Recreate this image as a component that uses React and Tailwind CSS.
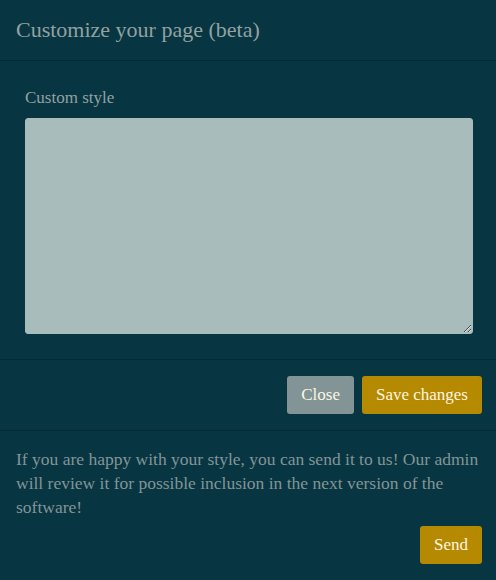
export default function App() {
  return (
    <div className="w-[496px] h-[580px] bg-[#073642] text-[#93a1a1] overflow-hidden" style={{ fontFamily: '"Liberation Serif", serif' }}>
      <div className="h-[61px] flex items-center px-4 border-b border-[#032a33]">
        <h1 className="text-[22px] leading-[28px] text-[#93a1a1]">Customize your page (beta)</h1>
      </div>
      <div className="pl-[25px] pt-[25px] pb-[25px] border-b border-[#032a33]">
        <label className="block text-[17px] leading-[24px] mb-[8px]">Custom style</label>
        <textarea className="block w-[448px] h-[216px] rounded-[3px] bg-[#a8bcbc] border border-[#a8bcbc] outline-none" />
      </div>
      <div className="h-[71px] flex items-center justify-end gap-2 pr-[14px] border-b border-[#032a33]">
        <button className="h-[38px] px-[14px] rounded-[3px] bg-[#839496] text-[#fdf6e3] text-[17px]">Close</button>
        <button className="h-[38px] px-[14px] rounded-[3px] bg-[#b58900] text-[#fdf6e3] text-[17px]">Save changes</button>
      </div>
      <div className="px-4 pt-[16px]">
        <p className="text-[17.5px] leading-[24px] text-[#839496]">If you are happy with your style, you can send it to us! Our admin will review it for possible inclusion in the next version of the software!</p>
        <div className="flex justify-end mt-[7px] mr-[-2px]">
          <button className="h-[38px] px-[14px] rounded-[3px] bg-[#b58900] text-[#fdf6e3] text-[17px]">Send</button>
        </div>
      </div>
    </div>
  );
}
